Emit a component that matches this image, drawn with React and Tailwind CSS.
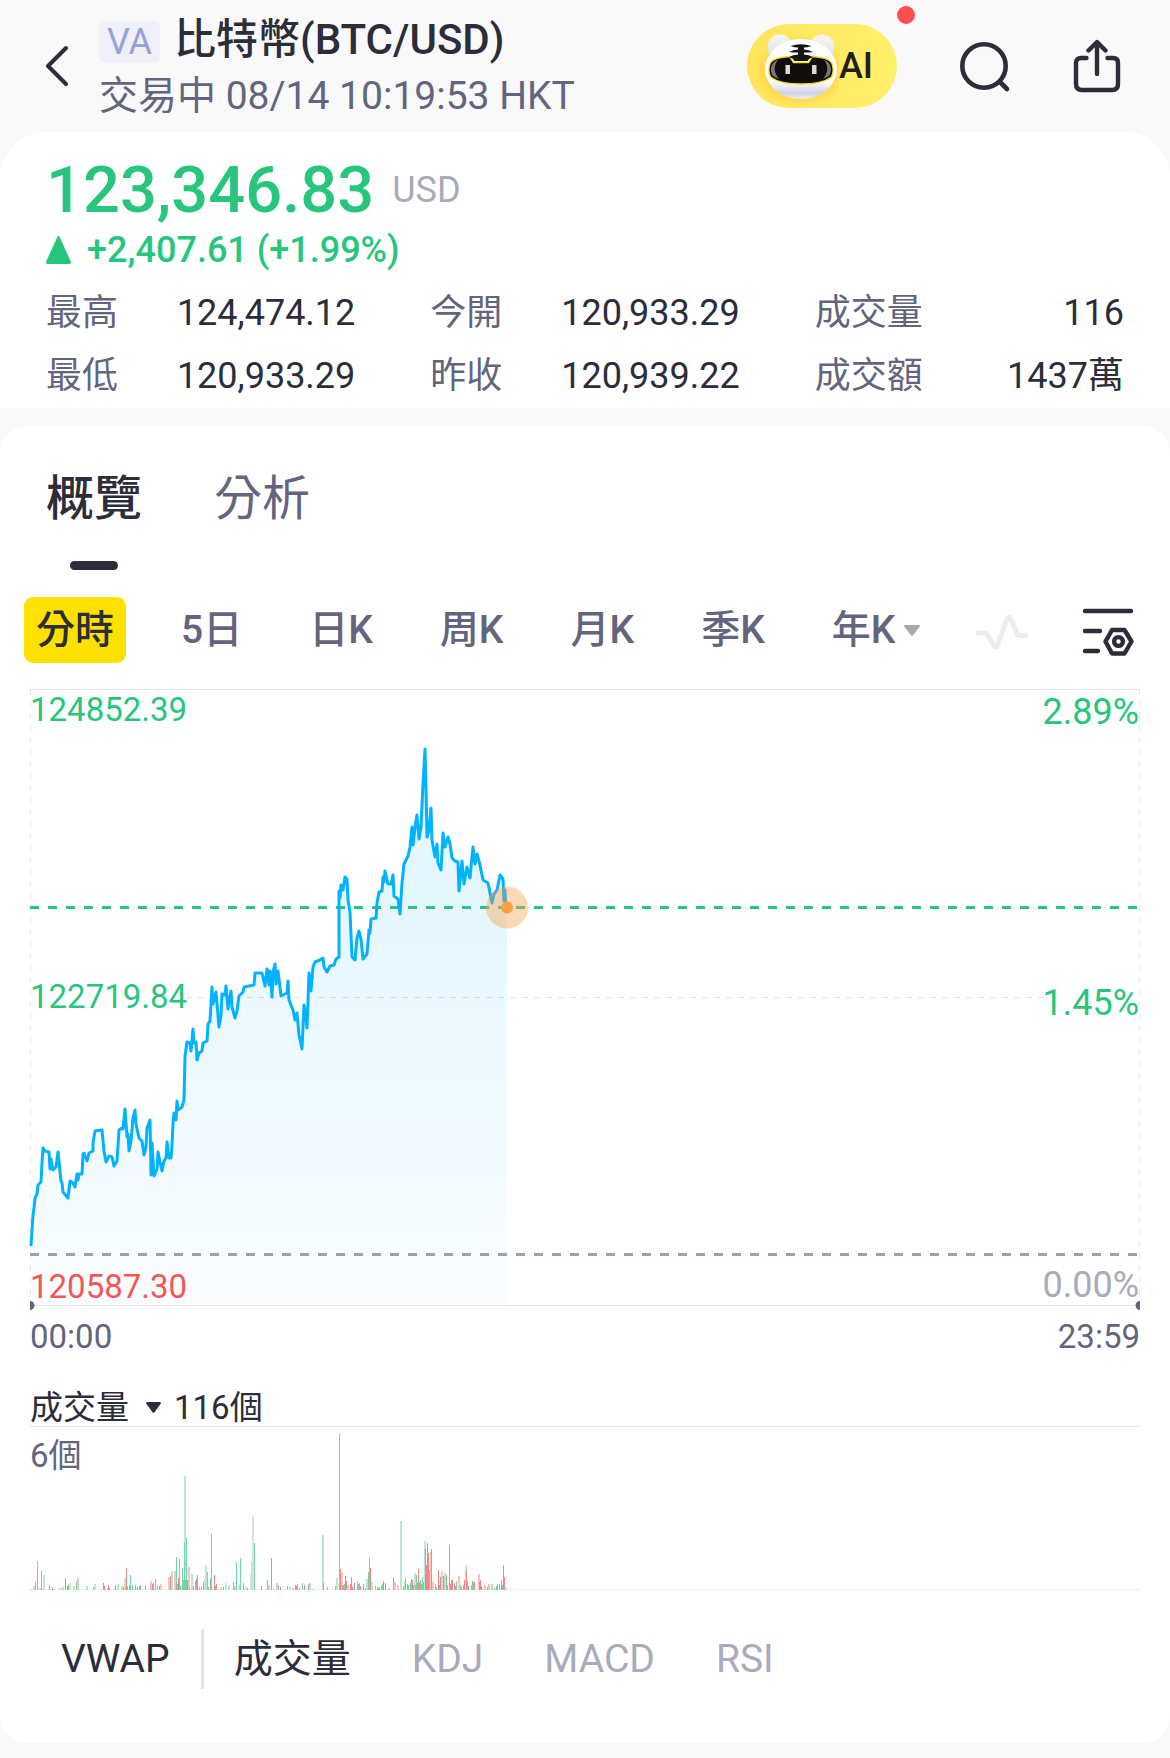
import { useState } from "react";

// minute line, in chart units (1110 x 617)
const PRICE_LINE = [
  [1, 557], [3, 526], [4, 519], [5, 509], [7, 505], [8, 496], [11, 493], [12, 474], [13, 459], [15, 462],
  [19, 463], [20, 480], [21, 470], [23, 481], [26, 478], [28, 463], [31, 492], [32, 494], [33, 503], [38, 509],
  [40, 492], [43, 494], [45, 498], [47, 485], [48, 491], [49, 485], [52, 485], [53, 465], [54, 464], [57, 472],
  [59, 464], [63, 462], [63, 454], [65, 442], [72, 441], [74, 462], [76, 473], [79, 467], [82, 468], [84, 477],
  [87, 472], [89, 441], [92, 439], [93, 440], [95, 420], [97, 448], [98, 445], [99, 462], [101, 452], [103, 429],
  [105, 421], [106, 435], [109, 449], [112, 452], [114, 466], [116, 458], [117, 439], [120, 431], [121, 486],
  [122, 454], [124, 487], [127, 480], [128, 463], [130, 473], [132, 482], [134, 472], [136, 469], [137, 453],
  [139, 469], [141, 469], [142, 456], [143, 434], [144, 424], [146, 431], [147, 412], [148, 421], [152, 418],
  [154, 411], [155, 367], [157, 353], [160, 354], [161, 362], [163, 340], [164, 354], [166, 353], [167, 371],
  [169, 364], [172, 362], [173, 354], [177, 352], [178, 335], [180, 332], [182, 298], [183, 315], [186, 303],
  [189, 338], [191, 326], [192, 305], [195, 306], [196, 297], [198, 320], [201, 302], [202, 318], [205, 329],
  [207, 322], [209, 307], [213, 303], [214, 298], [224, 296], [225, 284], [232, 284], [235, 297], [237, 280],
  [239, 296], [240, 282], [242, 308], [243, 283], [245, 275], [246, 295], [248, 282], [251, 307], [257, 304],
  [258, 292], [259, 311], [263, 321], [265, 331], [267, 324], [269, 346], [272, 360], [274, 316], [276, 330],
  [277, 339], [279, 284], [281, 302], [283, 278], [285, 273], [290, 271], [293, 269], [294, 278], [297, 283],
  [300, 277], [304, 276], [306, 270], [309, 268], [309, 202], [310, 209], [311, 196], [313, 201], [315, 188],
  [317, 190], [318, 211], [320, 223], [322, 268], [325, 271], [327, 249], [329, 242], [331, 250], [333, 270],
  [337, 265], [339, 241], [340, 244], [341, 230], [346, 229], [347, 214], [349, 203], [352, 202], [353, 188],
  [354, 193], [355, 182], [358, 195], [361, 195], [363, 186], [364, 207], [368, 210], [370, 225], [372, 194],
  [374, 175], [378, 167], [380, 158], [382, 138], [383, 156], [385, 138], [387, 126], [389, 150], [391, 138],
  [393, 95], [395, 60], [396, 100], [397, 148], [399, 141], [401, 119], [402, 151], [405, 168], [407, 155],
  [408, 174], [411, 181], [413, 144], [415, 158], [418, 148], [420, 155], [422, 169], [425, 172], [428, 173],
  [429, 202], [432, 172], [434, 195], [437, 178], [440, 189], [443, 158], [445, 175], [447, 165], [450, 176],
  [453, 191], [458, 194], [462, 214], [464, 205], [467, 201], [470, 186], [473, 190], [474, 212], [475, 201],
  [476, 218],
];

const LINE_PATH = "M" + PRICE_LINE.map((p) => p.join(" ")).join("L");

// g / r = up / down, capitals are the faded double-width bars, n = unchanged
const BAR_STYLES = {
  g: { fill: "#70d6a6", width: 1 },
  r: { fill: "#f08985", width: 1 },
  G: { fill: "#b7e9d1", width: 2 },
  R: { fill: "#fac3c1", width: 2 },
  n: { fill: "#dcdde3", width: 2 },
};

const VOLUME = [
  [0, 1, "r"], [3, 4, "G"], [5, 8, "g"], [7, 29, "g"], [9, 2, "R"], [11, 19, "g"], [13, 15, "G"], [19, 5, "r"],
  [22, 3, "r"], [24, 1, "g"], [29, 2, "R"], [32, 3, "R"], [35, 12, "r"], [37, 4, "r"], [38, 5, "g"], [39, 7, "G"],
  [43, 4, "R"], [46, 9, "g"], [47, 12, "R"], [56, 4, "G"], [63, 3, "g"], [64, 6, "G"], [73, 7, "r"], [74, 4, "r"],
  [77, 2, "G"], [78, 5, "r"], [79, 2, "r"], [85, 5, "r"], [87, 6, "G"], [91, 4, "R"], [93, 3, "r"], [94, 12, "G"],
  [96, 22, "r"], [97, 4, "g"], [99, 5, "g"], [100, 15, "g"], [102, 5, "g"], [105, 5, "r"], [107, 3, "r"],
  [109, 4, "r"], [110, 5, "g"], [115, 5, "g"], [120, 9, "R"], [122, 6, "r"], [123, 7, "r"], [125, 11, "g"],
  [127, 5, "g"], [129, 4, "r"], [130, 6, "R"], [138, 13, "R"], [140, 14, "r"], [141, 19, "G"], [144, 19, "R"],
  [146, 33, "g"], [147, 6, "g"], [148, 12, "r"], [149, 31, "g"], [150, 4, "g"], [152, 22, "g"], [153, 10, "g"],
  [154, 114, "G"], [154, 47, "g"], [155, 10, "g"], [156, 52, "g"], [157, 10, "r"], [158, 23, "R"], [159, 3, "g"],
  [161, 16, "G"], [163, 4, "r"], [165, 9, "g"], [166, 11, "r"], [167, 15, "g"], [169, 3, "g"], [171, 3, "g"],
  [173, 8, "g"], [174, 11, "n"], [175, 25, "G"], [177, 18, "g"], [178, 3, "r"], [180, 12, "g"], [181, 56, "g"],
  [184, 15, "r"], [185, 4, "r"], [186, 6, "r"], [190, 3, "G"], [193, 3, "r"], [195, 7, "G"], [198, 5, "G"],
  [203, 8, "r"], [204, 4, "R"], [206, 28, "g"], [208, 5, "G"], [210, 32, "g"], [213, 7, "r"], [215, 4, "n"],
  [217, 2, "g"], [220, 16, "n"], [221, 28, "G"], [222, 74, "n"], [223, 24, "n"], [224, 47, "g"], [231, 4, "g"],
  [237, 10, "g"], [238, 5, "R"], [241, 32, "r"], [243, 1, "g"], [246, 7, "R"], [248, 5, "g"], [250, 3, "r"],
  [257, 4, "g"], [259, 3, "G"], [262, 2, "R"], [265, 5, "r"], [266, 4, "r"], [267, 6, "g"], [269, 2, "r"],
  [272, 7, "g"], [274, 5, "r"], [278, 6, "g"], [279, 7, "R"], [282, 1, "g"], [292, 55, "G"], [293, 7, "r"],
  [297, 3, "g"], [305, 4, "g"], [306, 12, "G"], [309, 156, "g"], [310, 21, "r"], [311, 18, "R"], [312, 4, "r"],
  [313, 5, "g"], [314, 6, "g"], [315, 14, "r"], [316, 9, "r"], [317, 5, "R"], [320, 6, "r"], [321, 13, "r"],
  [322, 3, "r"], [324, 7, "r"], [327, 9, "g"], [328, 6, "g"], [329, 7, "g"], [330, 4, "r"], [333, 6, "r"],
  [335, 2, "r"], [336, 11, "G"], [338, 18, "g"], [339, 32, "g"], [340, 22, "r"], [341, 8, "G"], [345, 4, "g"],
  [347, 3, "g"], [348, 2, "g"], [349, 3, "g"], [351, 4, "g"], [352, 6, "g"], [353, 9, "r"], [355, 7, "r"],
  [358, 2, "R"], [363, 12, "r"], [364, 8, "R"], [367, 5, "R"], [370, 69, "G"], [373, 4, "r"], [374, 9, "G"],
  [375, 12, "g"], [377, 6, "g"], [378, 5, "g"], [380, 7, "g"], [381, 11, "g"], [382, 10, "r"], [383, 5, "r"],
  [384, 17, "G"], [385, 5, "g"], [386, 15, "g"], [387, 7, "g"], [388, 21, "r"], [389, 8, "g"], [390, 10, "g"],
  [391, 6, "g"], [392, 13, "g"], [393, 8, "g"], [394, 49, "G"], [395, 41, "r"], [396, 25, "r"], [397, 47, "r"],
  [398, 37, "r"], [399, 20, "g"], [400, 38, "R"], [401, 41, "r"], [402, 8, "R"], [405, 6, "g"], [406, 3, "g"],
  [408, 20, "r"], [409, 5, "r"], [410, 13, "r"], [411, 19, "G"], [413, 14, "r"], [414, 17, "R"], [416, 15, "g"],
  [417, 5, "g"], [419, 45, "r"], [420, 6, "r"], [421, 10, "r"], [422, 10, "r"], [424, 7, "r"], [425, 4, "r"],
  [426, 9, "g"], [428, 14, "R"], [430, 5, "g"], [431, 3, "g"], [433, 5, "r"], [434, 10, "r"], [435, 25, "G"],
  [436, 19, "r"], [437, 9, "g"], [438, 4, "r"], [441, 5, "g"], [442, 9, "g"], [443, 8, "g"], [444, 8, "r"],
  [448, 16, "R"], [449, 8, "r"], [450, 10, "r"], [451, 4, "r"], [454, 5, "R"], [457, 3, "r"], [458, 6, "R"],
  [461, 6, "R"], [462, 3, "g"], [464, 2, "g"], [466, 4, "g"], [467, 6, "g"], [469, 6, "g"], [471, 10, "r"],
  [472, 5, "g"], [473, 25, "r"], [474, 13, "r"], [476, 1, "r"],
];

const QUOTE = [
  ["最高", "124,474.12"],
  ["今開", "120,933.29"],
  ["成交量", "116"],
  ["最低", "120,933.29"],
  ["昨收", "120,939.22"],
  ["成交額", "1437萬"],
];

const TABS = ["概覽", "分析"];
const PERIODS = ["分時", "5日", "日K", "周K", "月K", "季K", "年K"];
const INDICATORS = ["成交量", "KDJ", "MACD", "RSI"];

function TigerLogo() {
  return (
    <svg className="h-[84px] w-[92px]" viewBox="0 0 92 84" aria-hidden="true">
      <defs>
        <radialGradient id="glow" cx="0.5" cy="0.5" r="0.5">
          <stop offset="0.6" stopColor="#ffc93c" stopOpacity="0.8" />
          <stop offset="1" stopColor="#ffc93c" stopOpacity="0" />
        </radialGradient>
        <linearGradient id="head" x1="0" y1="0" x2="0" y2="1">
          <stop offset="0.7" stopColor="#ffffff" />
          <stop offset="0.9" stopColor="#cfd2e6" />
          <stop offset="1" stopColor="#eceef6" />
        </linearGradient>
        <linearGradient id="ear" x1="0" y1="0" x2="0" y2="1">
          <stop offset="0" stopColor="#f6f6f8" />
          <stop offset="1" stopColor="#dfe0e4" />
        </linearGradient>
      </defs>
      <ellipse cx="54" cy="47" rx="48" ry="37" fill="url(#glow)" />
      <circle cx="33" cy="23" r="12.5" fill="url(#ear)" />
      <circle cx="75" cy="23" r="12.5" fill="url(#ear)" />
      <ellipse cx="54" cy="45" rx="36" ry="30" fill="url(#head)" />
      <path
        d="M42.500 32.500L46.500 38.500H61.500L65.500 32.500C75 33 82 35 84.500 38.500C86.500 43 86.500 49 84.500 53C78 58 66 60 54 60C42 60 30 58 23.500 53C21.500 49 21.500 43 23.500 38.500C26 35 33 33 42.500 32.500Z"
        fill="#120d0b"
        stroke="#f5df1c"
        strokeWidth="1.3"
      />
      <path d="M31 36C24 38 22 46 26 52L32 55C27 49 26 42 31 36ZM77 36C84 38 86 46 82 52L76 55C81 49 82 42 77 36Z" fill="#77757a" />
      <path
        d="M43.500 22Q54 18.500 64.500 22Q60 23.500 57 23.500V25.500Q62 25.500 66 28Q61 28.700 57 28.500V30.500Q62 30.500 66 33Q64 34 62.500 34.500L60.500 37H47.500L45.500 34.500Q44 34 42 33Q46 30.500 51 30.500V28.500Q47 28.700 42 28Q46 25.500 51 25.500V23.500Q48 23.500 43.500 22Z"
        fill="#161414"
      />
      <path d="M38.500 41h4.500v9h-4.500zM65 41h4.500v9h-4.500z" fill="#d9d9d9" />
    </svg>
  );
}

function Header() {
  return (
    <header className="flex h-[132px] items-center pr-12 pl-[42px]">
      <button type="button" aria-label="返回" className="w-[57px] shrink-0">
        <svg className="h-[42px] w-[30px]" viewBox="0 0 30 42" fill="none" stroke="#2b2d3b" strokeWidth="4" strokeLinecap="round" strokeLinejoin="round">
          <path d="M24 3L6 21L24 39" />
        </svg>
      </button>

      <div className="min-w-0 flex-1 pt-1">
        <div className="flex h-14 items-center">
          <span className="mt-1 mr-[14px] flex h-[42px] items-center rounded-md bg-[#f0f1f8] px-2 text-[36px] leading-none text-[#95a0dc]">VA</span>
          <h1 className="text-[42px] leading-[56px] font-medium whitespace-nowrap">比特幣(BTC/USD)</h1>
        </div>
        <p className="text-[39px] leading-[56px] whitespace-nowrap text-[#62657d]">交易中 08/14 10:19:53 HKT</p>
      </div>

      <div className="flex shrink-0 items-center">
        <button type="button" className="relative flex h-[84px] w-[150px] items-center rounded-full bg-linear-to-r from-[#ffe55c] to-[#fff06c]">
          <TigerLogo />
          <span className="text-[36px] leading-none font-medium text-[#1f1f1f]">AI</span>
          <span className="absolute -top-[18px] -right-[18px] size-[18px] rounded-full bg-[#ff4d51]" />
        </button>
        <button type="button" aria-label="搜尋" className="ml-[61px]">
          <svg className="size-[54px]" viewBox="0 0 54 54" fill="none" stroke="#2b2d3b" strokeWidth="4.600" strokeLinecap="round">
            <circle cx="26" cy="27" r="21.700" />
            <path d="M42 43L49 50" />
          </svg>
        </button>
        <button type="button" aria-label="分享" className="ml-[60px]">
          <svg className="h-[54px] w-[50px]" viewBox="0 0 50 54" fill="none" stroke="#2b2d3b" strokeWidth="4.400" strokeLinecap="round" strokeLinejoin="round">
            <path d="M25 35V4M16.500 11.500L25 3L33.500 11.500" />
            <path d="M14.500 19H9Q4 19 4 24V45Q4 51 10 51H40Q46 51 46 45V24Q46 19 41 19H35.500" />
          </svg>
        </button>
      </div>
    </header>
  );
}

function QuoteCard() {
  return (
    <section className="rounded-t-[46px] bg-white px-[46px] pt-[22px]">
      <div className="flex items-center text-[#27c67c]">
        <strong className="text-[65px] leading-[72px] font-medium">123,346.83</strong>
        <span className="ml-[18px] text-[36px] leading-[48px] text-[#a8abb9]">USD</span>
      </div>
      <div className="flex items-center text-[36px] leading-[48px] font-medium text-[#27c67c]">
        <svg className="mr-4 h-[28px] w-[25px]" viewBox="0 0 25 28" fill="currentColor" aria-hidden="true">
          <path d="M11.300 1Q12.500 -1 13.700 1L25 26Q25 28 23.500 28H1.500Q0 28 0 26Z" />
        </svg>
        <span>+2,407.61 (+1.99%)</span>
      </div>
      <dl className="mt-2 grid grid-cols-3 gap-x-[75px] text-[36px] leading-[63px]">
        {QUOTE.map(([label, value]) => (
          <div key={label} className="flex justify-between whitespace-nowrap">
            <dt className="text-[#62657d]">{label}</dt>
            <dd>{value}</dd>
          </div>
        ))}
      </dl>
    </section>
  );
}

function PeriodBar() {
  const [period, setPeriod] = useState("分時");

  return (
    <div className="mt-[27px] flex items-center pr-9 pl-6">
      <div className="flex gap-[43px]">
        {PERIODS.map((p) => (
          <button
            key={p}
            type="button"
            onClick={() => setPeriod(p)}
            className={`flex items-center rounded-[9px] px-3 text-[39px] leading-[66px] font-medium whitespace-nowrap ${
              p === period ? "bg-[#ffe100] text-[#2b2d3b]" : "text-[#62657d]"
            }`}
          >
            {p}
            {p === "年K" && (
              <svg className="ml-[9px] h-[11px] w-[16px]" viewBox="0 0 16 11" fill="#a5a8b6" aria-hidden="true">
                <path d="M1 0H15Q16.500 .5 15.500 2L9 10.300Q8 11.300 7 10.300L.5 2Q-.5 .5 1 0Z" />
              </svg>
            )}
          </button>
        ))}
      </div>
      <div className="mt-[3px] ml-auto flex items-center gap-[53px]">
        <button type="button" aria-label="走勢">
          <svg className="h-[38px] w-[54px]" viewBox="0 0 54 38" fill="none" stroke="#ebecf0" strokeWidth="5" strokeLinecap="round" strokeLinejoin="round">
            <path d="M3 20H10Q11.500 20 12.500 22L19 33Q20.500 35 22 33L32.500 5Q34 3 35.500 5L42.500 21Q43.500 22.500 45 22.500H51" />
          </svg>
        </button>
        <button type="button" aria-label="圖表設定">
          <svg className="h-[50px] w-[52px]" viewBox="0 0 52 50" fill="none" stroke="#2b2d3b" strokeWidth="4.400" strokeLinecap="round" strokeLinejoin="round">
            <path d="M3 4H49M3 24H18M3 44H16" />
            <path d="M30 23H42.500L49.500 34.500L42.500 46.500H30L23.500 34.500Z" />
            <circle cx="36.500" cy="34.500" r="4.400" />
          </svg>
        </button>
      </div>
    </div>
  );
}

function PriceChart() {
  return (
    <div className="mt-[26px]">
      <div className="relative">
        <svg className="block h-auto w-full" viewBox="0 0 1110 617" fill="none" overflow="visible" role="img" aria-label="BTC/USD 分時圖">
          <defs>
            <linearGradient id="area" x1="0" y1="60" x2="0" y2="617" gradientUnits="userSpaceOnUse">
              <stop offset="0" stopColor="#dff4fe" />
              <stop offset="1" stopColor="#fafdff" />
            </linearGradient>
          </defs>
          <path d={`${LINE_PATH}L477 218V616H1Z`} fill="url(#area)" />
          <path d="M0 .5H1110M0 616.500H1110" stroke="#e4e4e6" />
          <path d="M.5 0V616M1109.500 0V616" stroke="#e8e8ea" strokeDasharray="6 6" />
          <path d="M156 308.500H1014" stroke="#000000" strokeOpacity="0.12" strokeDasharray="6 6" />
          <path d="M0 565.500H1110" stroke="#9c9fae" strokeWidth="3" strokeDasharray="9 9" />
          <path d="M0 218.500H1110" stroke="#27c67c" strokeWidth="3" strokeDasharray="9 9" />
          <path d={LINE_PATH} stroke="#00b3ff" strokeWidth="3" strokeLinejoin="round" />
          <circle cx="477" cy="218.500" r="21" fill="#f7a144" fillOpacity="0.4" />
          <circle cx="477" cy="218.500" r="6" fill="#f7a144" />
          <path d="M0 612a4.500 4.500 0 0 1 0 9ZM1110 612a4.500 4.500 0 0 0 0 9Z" fill="#62657d" />
        </svg>
        {/* scale labels sit on top of the plot */}
        <div className="absolute inset-x-0 top-px -bottom-px flex justify-between pr-px">
          <div className="flex flex-col justify-between text-[33px] leading-[40px] text-[#27c67c]">
            <span>124852.39</span>
            <span className="pb-1">122719.84</span>
            <span className="text-[#f35755]">120587.30</span>
          </div>
          <div className="flex flex-col justify-between text-right text-[36px] leading-[44px] text-[#27c67c]">
            <span>2.89%</span>
            <span className="pt-2">1.45%</span>
            <span className="text-[#a8abb9]">0.00%</span>
          </div>
        </div>
      </div>
      <div className="mt-[7px] flex justify-between text-[33px] leading-[48px] text-[#62657d]">
        <span>00:00</span>
        <span>23:59</span>
      </div>
    </div>
  );
}

function VolumeChart() {
  return (
    <div className="mt-7">
      <button type="button" className="flex items-center text-[33px] leading-[37px]">
        成交量
        <svg className="mr-[13px] ml-[17px] h-[11px] w-[15px]" viewBox="0 0 15 11" fill="currentColor" aria-hidden="true">
          <path d="M1 0H14Q15.500 .5 14.500 2L8.500 10.300Q7.500 11.300 6.500 10.300L.5 2Q-.5 .5 1 0Z" />
        </svg>
        116個
      </button>
      <div className="relative">
        <svg className="block h-auto w-full" viewBox="0 0 1110 164" role="img" aria-label="成交量圖" shapeRendering="crispEdges">
          <path d="M0 .5H1110" stroke="#e2e3e5" />
          <path d="M0 163.500H1110" stroke="#efeff1" />
          {VOLUME.map(([x, h, kind], i) => (
            <rect key={i} x={x} y={164 - h} width={BAR_STYLES[kind].width} height={h} fill={BAR_STYLES[kind].fill} />
          ))}
        </svg>
        <span className="absolute top-[9px] left-0 text-[33px] leading-[42px] text-[#62657d]">6個</span>
      </div>
    </div>
  );
}

export default function App() {
  const [tab, setTab] = useState("概覽");
  const [indicator, setIndicator] = useState("成交量");

  return (
    <div className="min-h-screen bg-[#f9f9f9] font-['Roboto','Noto_Sans_CJK_TC',sans-serif] text-[#2b2d3b]">
      <Header />
      <main>
        <QuoteCard />

        <section className="mt-[18px] rounded-[27px] bg-white pt-[37px] pb-[54px]">
          <nav className="flex gap-[72px] px-[46px]">
            {TABS.map((t) => (
              <button
                key={t}
                type="button"
                onClick={() => setTab(t)}
                className={`flex flex-col items-center text-[48px] leading-[72px] ${t === tab ? "font-medium" : "text-[#62657d]"}`}
              >
                {t}
                {t === tab && <span className="mt-[26px] h-[9px] w-12 rounded-full bg-[#2b2d3b]" />}
              </button>
            ))}
          </nav>

          <PeriodBar />

          <div className="px-[30px]">
            <PriceChart />
            <VolumeChart />
          </div>

          <div className="mt-[39px] flex h-[60px] items-center pl-[61px] text-[39px] leading-[60px]">
            <button type="button">VWAP</button>
            <span className="mr-[30px] ml-[31px] h-full w-[3px] bg-[#e2e3e6]" />
            <div className="flex gap-[61px]">
              {INDICATORS.map((name) => (
                <button
                  key={name}
                  type="button"
                  onClick={() => setIndicator(name)}
                  className={name === indicator ? "text-[#2b2d3b]" : "text-[#a8abb9]"}
                >
                  {name}
                </button>
              ))}
            </div>
          </div>
        </section>
      </main>
    </div>
  );
}
